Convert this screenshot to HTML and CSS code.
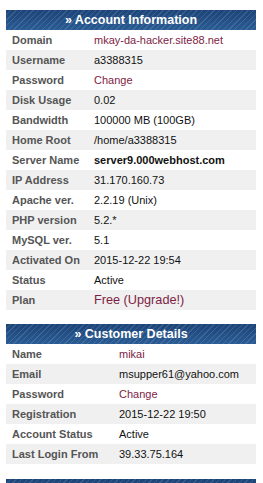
FILE: index.html
```html
<!DOCTYPE html>
<html>
<head>
<meta charset="utf-8">
<link rel="stylesheet" href="styles.css">
</head>
<body>
<div class="page">
  <section class="panel">
    <div class="panel-head">» Account Information</div>
    <table class="info info-account">
      <tr><th>Domain</th><td><a class="link">mkay-da-hacker.site88.net</a></td></tr>
      <tr><th>Username</th><td>a3388315</td></tr>
      <tr><th>Password</th><td><a class="link">Change</a></td></tr>
      <tr><th>Disk Usage</th><td>0.02</td></tr>
      <tr><th>Bandwidth</th><td>100000 MB (100GB)</td></tr>
      <tr><th>Home Root</th><td>/home/a3388315</td></tr>
      <tr><th>Server Name</th><td class="strong">server9.000webhost.com</td></tr>
      <tr><th>IP Address</th><td>31.170.160.73</td></tr>
      <tr><th>Apache ver.</th><td>2.2.19 (Unix)</td></tr>
      <tr><th>PHP version</th><td>5.2.*</td></tr>
      <tr><th>MySQL ver.</th><td>5.1</td></tr>
      <tr><th>Activated On</th><td>2015-12-22 19:54</td></tr>
      <tr><th>Status</th><td>Active</td></tr>
      <tr><th>Plan</th><td><a class="link big">Free (Upgrade!)</a></td></tr>
    </table>
  </section>
  <section class="panel">
    <div class="panel-head">» Customer Details</div>
    <table class="info info-customer">
      <tr><th>Name</th><td><a class="link">mikai</a></td></tr>
      <tr><th>Email</th><td>msupper61@yahoo.com</td></tr>
      <tr><th>Password</th><td><a class="link">Change</a></td></tr>
      <tr><th>Registration</th><td>2015-12-22 19:50</td></tr>
      <tr><th>Account Status</th><td>Active</td></tr>
      <tr><th>Last Login From</th><td>39.33.75.164</td></tr>
    </table>
  </section>
  <section class="panel">
    <div class="panel-head">&nbsp;</div>
  </section>
</div>
</body>
</html>
```
FILE: styles.css
```css
html, body {
  margin: 0;
  padding: 0;
  background: #ffffff;
}
body {
  font-family: "Liberation Sans", Arial, sans-serif;
  font-size: 11px;
  color: #000;
}
.page {
  padding: 10px 7px 0 6px;
  display: flex;
  flex-direction: column;
  gap: 14px;
}
.panel + .panel + .panel {
  margin-top: 1px;
}
.panel-head {
  height: 20px;
  line-height: 20px;
  text-align: center;
  color: #fff;
  font-weight: bold;
  font-size: 12.5px;
  background-color: #22508a;
  background-image: repeating-linear-gradient(135deg, rgba(255,255,255,0) 0px, rgba(255,255,255,0) 3px, rgba(255,255,255,0.12) 3px, rgba(255,255,255,0.12) 4px), linear-gradient(#1c4478, #2a5b94);
}
.info {
  width: 100%;
  border-collapse: collapse;
}
.info tr:nth-child(even) {
  background: #f0f0f0;
}
.info th, .info td {
  height: 20px;
  padding: 0 6px;
  text-align: left;
  vertical-align: middle;
  white-space: nowrap;
}
.info th {
  font-weight: bold;
  color: #555555;
}
.info-account th {
  width: 70px;
}
.info-customer th {
  width: 95px;
}
.info td {
  color: #111;
}
.strong {
  font-weight: bold;
}
.link {
  color: #7d1d44;
  text-decoration: none;
}
.big {
  font-size: 12.7px;
}
```
